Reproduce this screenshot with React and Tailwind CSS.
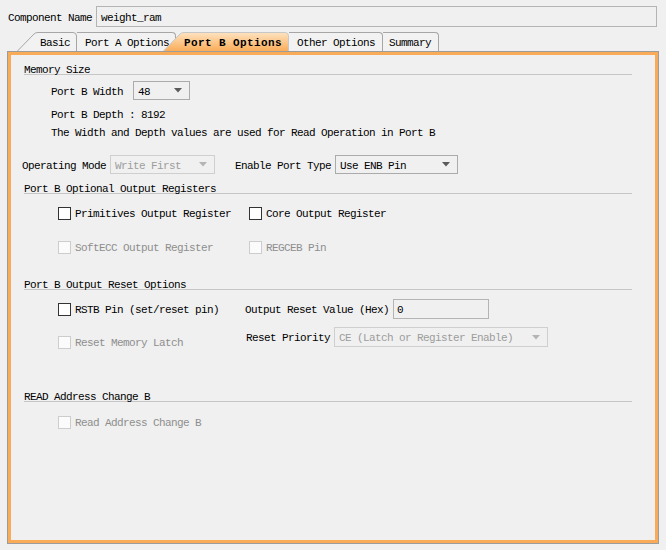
import React from "react";

const font = "font-[family-name:'Liberation_Mono',monospace] text-[11px] tracking-[-0.6px]";
// nudges text down a little so it sits like the bitmap font in the original
const nudge = "pt-[3px]";

const Arrow = ({ disabled }) => (
  <svg width="8" height="5" viewBox="0 0 8 5">
    <path d="M0 0 L8 0 L4 4.5 Z" fill={disabled ? "#b4b4b4" : "#5a5a5a"} />
  </svg>
);

const Select = ({ value, width, disabled, height = "h-[19px]" }) => (
  <div
    className={`flex items-center justify-between pl-[4px] pr-[7px] border ${height} ${
      disabled ? "border-[#cfcfcf] text-[#9d9d9d]" : "border-[#ababab] text-black"
    }`}
    style={{ width }}
  >
    <span className={nudge}>{value}</span>
    <Arrow disabled={disabled} />
  </div>
);

const Check = ({ label, disabled }) => (
  <div className="flex items-center gap-[4px]">
    <span
      className={`w-[13px] h-[13px] border ${
        disabled ? "border-[#cdcdcd] bg-[#fbfbfb]" : "border-[#333333] bg-white"
      }`}
    />
    <span className={`${nudge} ${disabled ? "text-[#8e8e8e]" : "text-black"}`}>{label}</span>
  </div>
);

const Header = ({ children, className = "" }) => (
  <div className={`leading-[8px] border-b border-[#c6c6c6] ${className}`}>{children}</div>
);

const TabShape = ({ w, selected }) => (
  <svg className="absolute inset-0" width={w} height="19" viewBox={`0 0 ${w} 19`}>
    {selected && (
      <defs>
        <linearGradient id="sel" x1="0" y1="0" x2="0" y2="1">
          <stop offset="0" stopColor="#fde3c0" />
          <stop offset="1" stopColor="#fbad5a" />
        </linearGradient>
      </defs>
    )}
    <path
      d={`M0.5 19 L17 2 Q18.5 0.5 21 0.5 L${w - 4} 0.5 Q${w - 0.5} 0.5 ${w - 0.5} 4 L${w - 0.5} 19`}
      fill={selected ? "url(#sel)" : "#f2f2f2"}
      stroke={selected ? "#c7c7c7" : "#a6a6a6"}
    />
  </svg>
);

export default function App() {
  return (
    <div className={`w-[666px] h-[550px] bg-[#f0f0f0] px-[7px] ${font} text-black`}>
      {/* Component name */}
      <div className="flex items-center pt-[6px] pl-[1px] gap-[4px]">
        <span className={nudge}>Component Name</span>
        <div className="w-[561px] h-[21px] border border-[#b4b4b4] flex items-center pl-[4px]">
          <span className={nudge}>weight_ram</span>
        </div>
      </div>

      {/* Tabs */}
      <div className="flex items-end h-[19px] mt-[5px] ml-[10px]">
        <div className="relative w-[60px] h-[19px] flex items-center">
          <TabShape w={60} />
          <span className={`relative pl-[23px] ${nudge}`}>Basic</span>
        </div>
        <div className="w-[99px] h-[19px] flex items-center border-t border-r border-[#a6a6a6] rounded-tr-[4px] bg-[#f2f2f2] pl-[8px]">
          <span className={nudge}>Port A Options</span>
        </div>
        <div className="relative w-[126px] h-[19px] -ml-[13px] z-10 flex items-center">
          <TabShape w={126} selected />
          <span className={`relative pl-[21px] ${nudge} font-bold tracking-[0.4px]`}>Port B Options</span>
        </div>
        <div className="w-[94px] h-[19px] flex items-center border-t border-r border-[#a6a6a6] rounded-tr-[4px] bg-[#f2f2f2] pl-[8px]">
          <span className={nudge}>Other Options</span>
        </div>
        <div className="w-[56px] h-[19px] flex items-center border-t border-r border-[#a6a6a6] rounded-tr-[4px] bg-[#f2f2f2] pl-[6px]">
          <span className={nudge}>Summary</span>
        </div>
      </div>

      {/* Panel */}
      <div className="h-[493px] border border-[#9c9c9c]">
        <div className="h-full border-[3px] border-[#f9ab58] pl-[13px] pr-[23px] pt-[11px]">
          <Header>Memory Size</Header>

          <div className="pl-[27px]">
            <div className="flex items-center h-[19px] mt-[6px] gap-[10px]">
              <span className={nudge}>Port B Width</span>
              <Select value="48" width={57} />
            </div>
            <div className="flex items-center h-[18px] mt-[5px]">
              <span className={nudge}>Port B Depth : 8192</span>
            </div>
            <div className="flex items-center h-[18px]">
              <span className={nudge}>The Width and Depth values are used for Read Operation in Port B</span>
            </div>
          </div>

          <div className="flex items-center h-[19px] mt-[14px] -ml-[2px]">
            <span className={nudge}>Operating Mode</span>
            <div className="ml-[4px]">
              <Select value="Write First" width={105} disabled />
            </div>
            <span className={`ml-[20px] ${nudge}`}>Enable Port Type</span>
            <div className="ml-[4px]">
              <Select value="Use ENB Pin" width={123} />
            </div>
          </div>

          <Header className="mt-[11px]">Port B Optional Output Registers</Header>
          <div className="pl-[34px]">
            <div className="flex items-center h-[20px] mt-[9px]">
              <div className="w-[191px]">
                <Check label="Primitives Output Register" />
              </div>
              <Check label="Core Output Register" />
            </div>
            <div className="flex items-center h-[20px] mt-[14px]">
              <div className="w-[191px]">
                <Check label="SoftECC Output Register" disabled />
              </div>
              <Check label="REGCEB Pin" disabled />
            </div>
          </div>

          <Header className="mt-[24px]">Port B Output Reset Options</Header>
          <div className="pl-[34px]">
            <div className="flex items-center h-[20px] mt-[9px]">
              <div className="w-[187px]">
                <Check label="RSTB Pin (set/reset pin)" />
              </div>
              <span className={nudge}>Output Reset Value (Hex)</span>
              <div className="ml-[4px] w-[96px] h-[20px] border border-[#b4b4b4] flex items-center pl-[3px]">
                <span className={nudge}>0</span>
              </div>
            </div>
            <div className="flex items-start mt-[8px]">
              <div className="w-[188px] h-[14px] mt-[8px] flex items-center">
                <Check label="Reset Memory Latch" disabled />
              </div>
              <div className="flex items-center h-[20px] gap-[4px]">
                <span className={nudge}>Reset Priority</span>
                <Select value="CE (Latch or Register Enable)" width={214} disabled height="h-[20px]" />
              </div>
            </div>
          </div>

          <Header className="mt-[44px]">READ Address Change B</Header>
          <div className="pl-[34px] flex items-center h-[20px] mt-[10px]">
            <Check label="Read Address Change B" disabled />
          </div>
        </div>
      </div>
    </div>
  );
}
